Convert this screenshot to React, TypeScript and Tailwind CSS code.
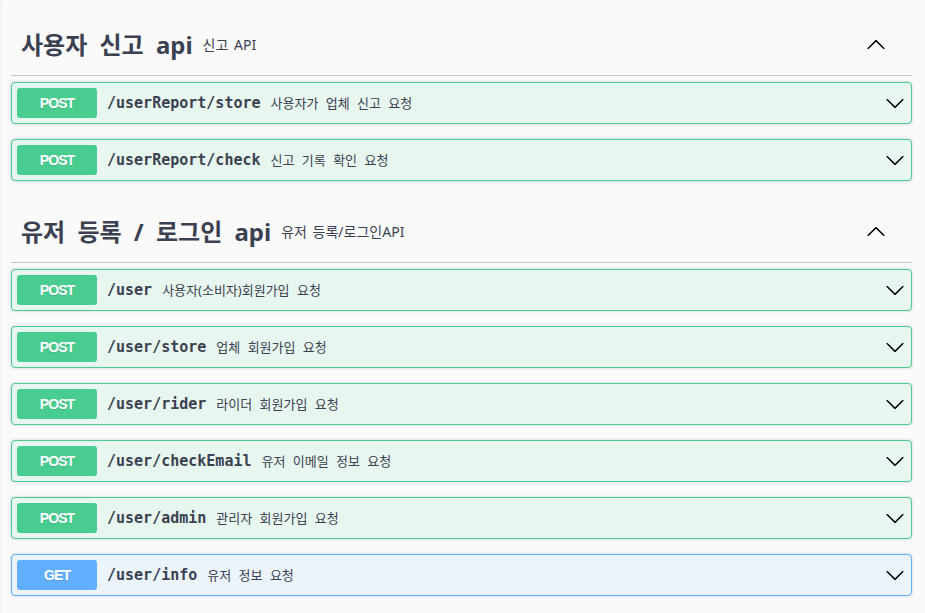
import React from "react"

type Op = { method: "POST" | "GET"; path: string; summary: string }

const sections: { title: string; desc: string; ops: Op[] }[] = [
  {
    title: "사용자 신고 api",
    desc: "신고 API",
    ops: [
      { method: "POST", path: "/userReport/store", summary: "사용자가 업체 신고 요청" },
      { method: "POST", path: "/userReport/check", summary: "신고 기록 확인 요청" },
    ],
  },
  {
    title: "유저 등록 / 로그인 api",
    desc: "유저 등록/로그인API",
    ops: [
      { method: "POST", path: "/user", summary: "사용자(소비자)회원가입 요청" },
      { method: "POST", path: "/user/store", summary: "업체 회원가입 요청" },
      { method: "POST", path: "/user/rider", summary: "라이더 회원가입 요청" },
      { method: "POST", path: "/user/checkEmail", summary: "유저 이메일 정보 요청" },
      { method: "POST", path: "/user/admin", summary: "관리자 회원가입 요청" },
      { method: "GET", path: "/user/info", summary: "유저 정보 요청" },
    ],
  },
]

function Arrow({ up }: { up?: boolean }) {
  return (
    <svg width="20" height="20" viewBox="0 0 20 20" className={up ? "rotate-180" : ""} fill="#000">
      <path d="M17.418 6.109c.272-.268.709-.268.979 0s.271.701 0 .969l-7.908 7.83c-.27.268-.707.268-.979 0l-7.908-7.83c-.27-.268-.27-.701 0-.969.271-.268.709-.268.979 0L10 13.25l7.418-7.141z" />
    </svg>
  )
}

function Operation({ op }: { op: Op }) {
  const post = op.method === "POST"
  return (
    <div
      className={
        post
          ? "mb-[15px] flex h-[42px] items-center rounded-[4px] border border-[#49cc90] bg-[#e8f6f0] pl-[5px] pr-[6px] shadow-[0_0_3px_rgba(0,0,0,0.19)]"
          : "mb-[15px] flex h-[42px] items-center rounded-[4px] border border-[#61affe] bg-[#ebf3fb] pl-[5px] pr-[6px] shadow-[0_0_3px_rgba(0,0,0,0.19)]"
      }
    >
      <div
        className={
          post
            ? "flex h-[30px] w-[80px] items-center justify-center rounded-[3px] bg-[#49cc90] font-['Liberation_Sans',sans-serif] text-[14px] font-bold tracking-[-0.9px] text-white [text-shadow:0_1px_0_rgba(0,0,0,0.1)]"
            : "flex h-[30px] w-[80px] items-center justify-center rounded-[3px] bg-[#61affe] font-['Liberation_Sans',sans-serif] text-[14px] font-bold tracking-[-0.9px] text-white [text-shadow:0_1px_0_rgba(0,0,0,0.1)]"
        }
      >
        {op.method}
      </div>
      <span className="px-[10px] font-['DejaVu_Sans_Mono',monospace] text-[15px] font-semibold leading-none text-[#3b4151]">
        {op.path}
      </span>
      <span className="flex-1 font-['Noto_Sans','Noto_Sans_CJK_KR',sans-serif] text-[13px] leading-none text-[#3b4151] [word-spacing:4px]">
        {op.summary}
      </span>
      <Arrow />
    </div>
  )
}

export default function App(): React.ReactElement {
  return (
    <div className="min-h-screen bg-[#fafafa] pl-[11px] pr-[13px] pt-[14px] shadow-[inset_4px_0_4px_-3px_rgba(0,0,0,0.06)]">
      {sections.map((s) => (
        <section key={s.title} className="pb-[5px]">
          <div className="mb-[6px] flex h-[62px] items-center border-b border-[#c4c6cb] pl-[10px] pr-[26px]">
            <h3 className="font-['Noto_Sans','Noto_Sans_CJK_KR',sans-serif] text-[24px] font-bold leading-none text-[#3b4151] [word-spacing:6px]">
              {s.title}
            </h3>
            <small className="flex-1 px-[10px] font-['Noto_Sans','Noto_Sans_CJK_KR',sans-serif] text-[14px] leading-none text-[#3b4151] [word-spacing:2px]">
              {s.desc}
            </small>
            <Arrow up />
          </div>
          {s.ops.map((op) => (
            <Operation key={op.path} op={op} />
          ))}
        </section>
      ))}
    </div>
  )
}
